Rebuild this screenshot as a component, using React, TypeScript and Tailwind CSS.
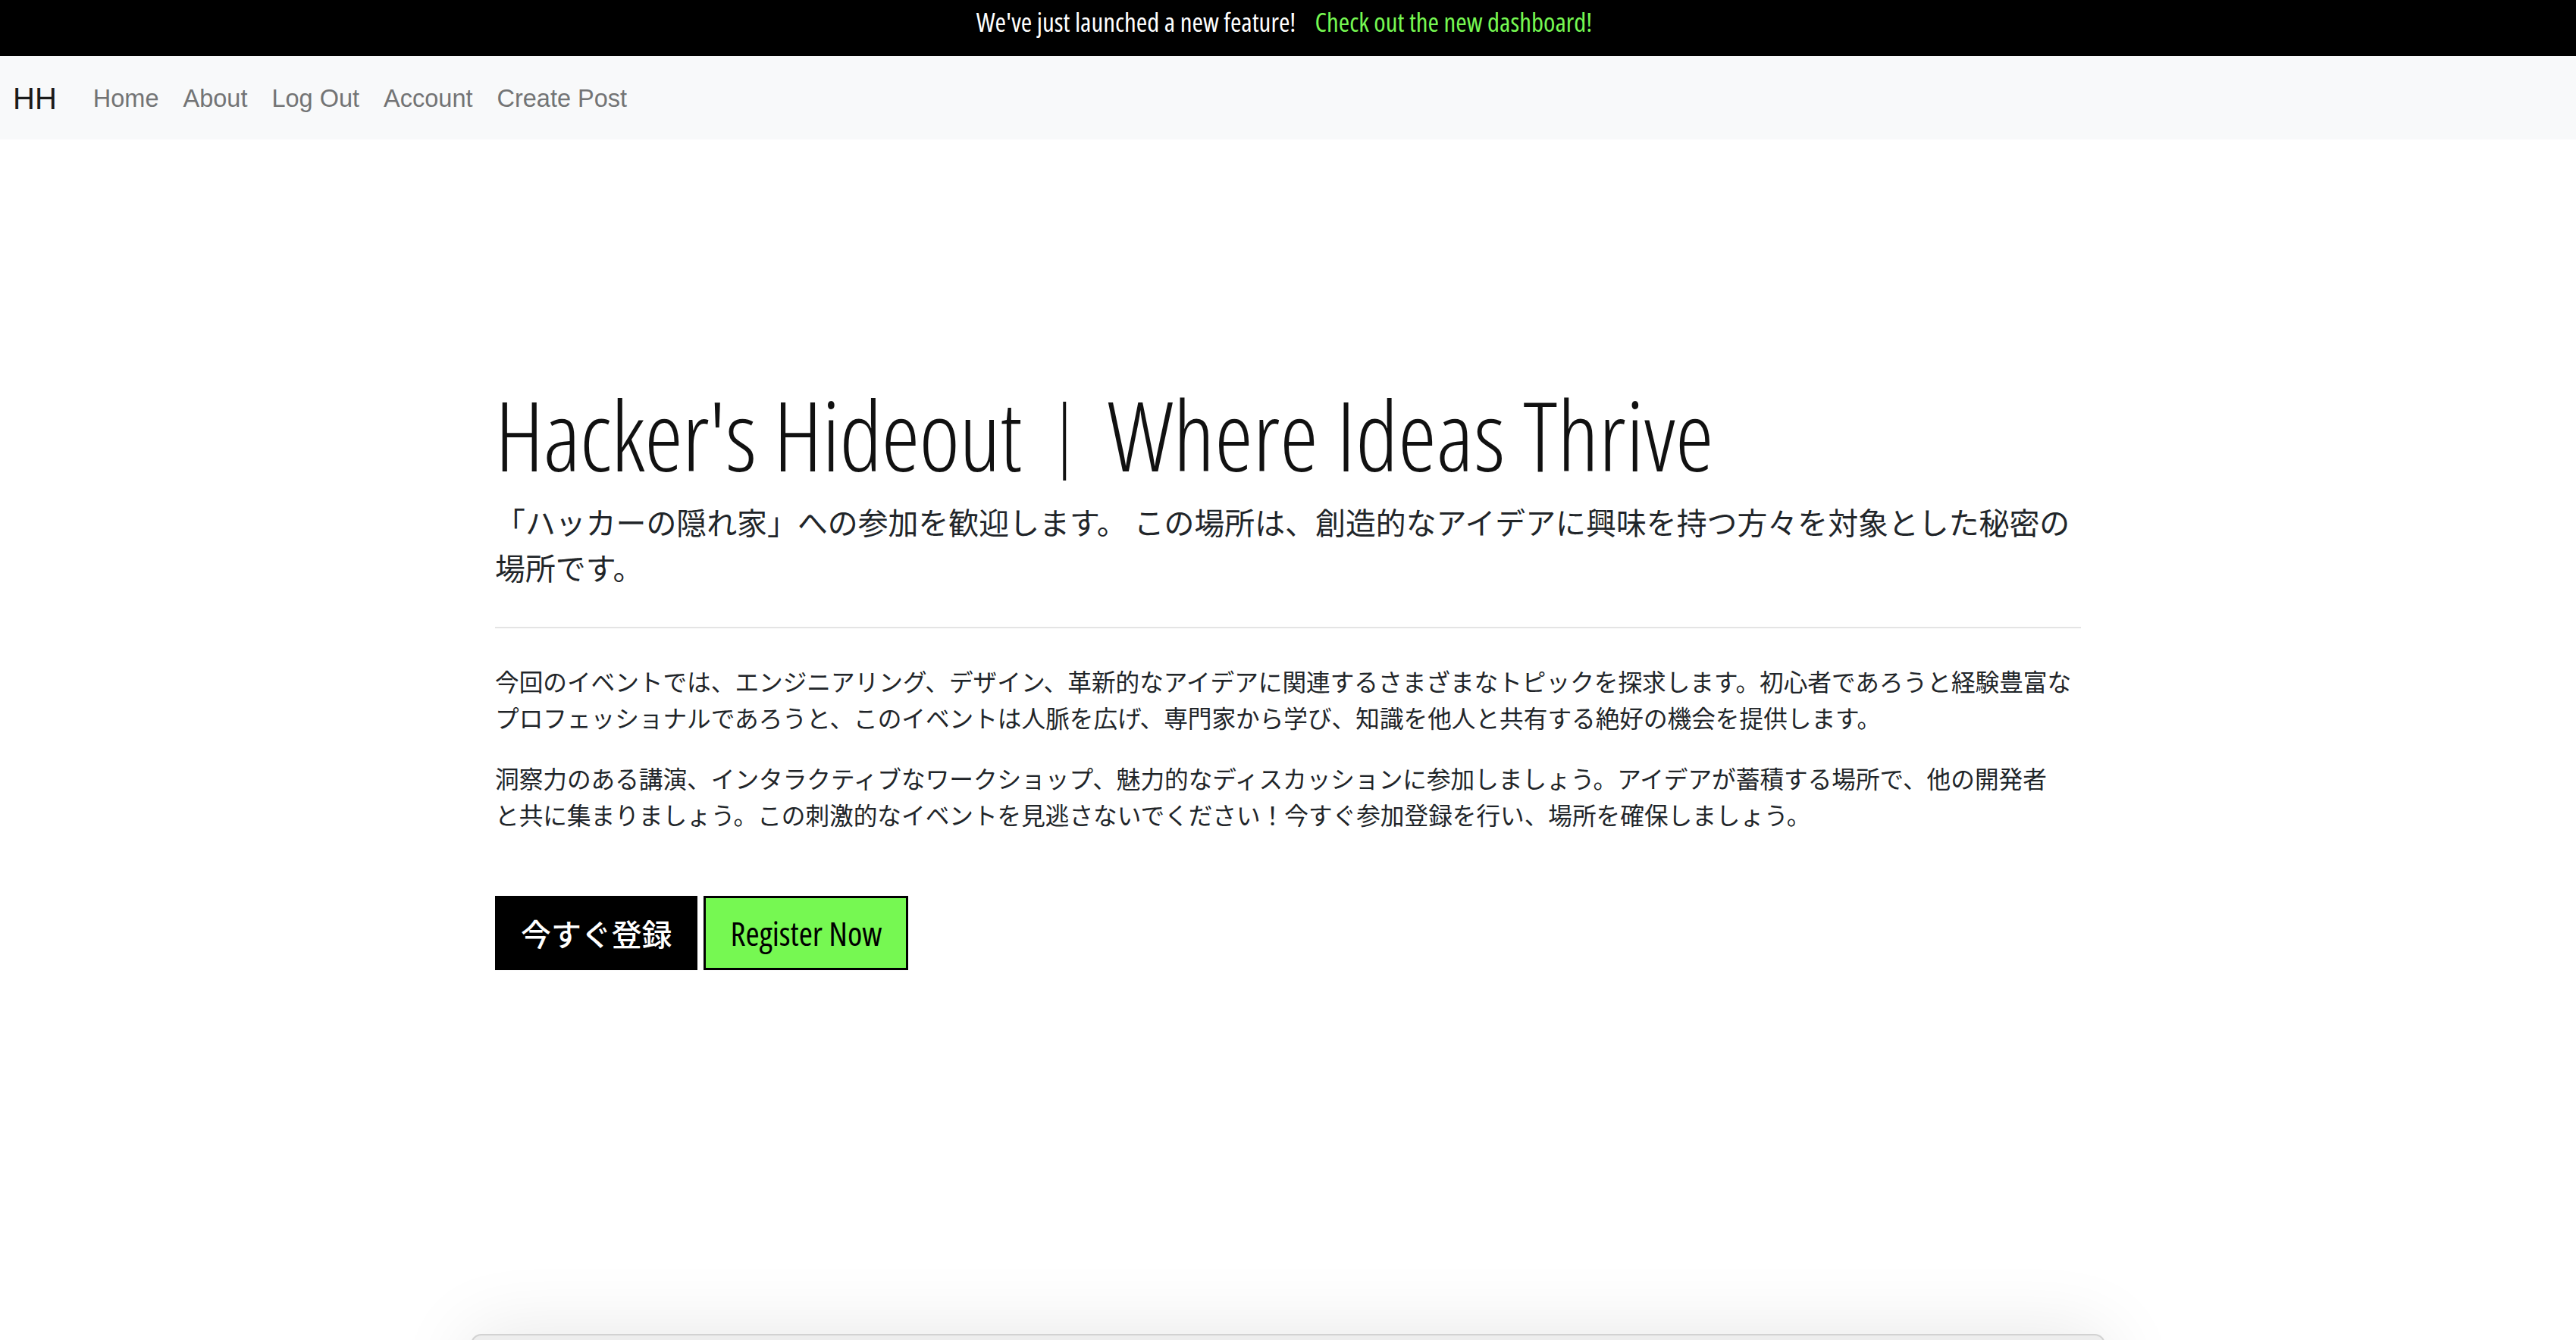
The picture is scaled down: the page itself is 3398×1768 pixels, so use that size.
const navLinks = ['Home', 'About', 'Log Out', 'Account', 'Create Post']

function Banner() {
  return (
    <div className="h-[74px] bg-black flex justify-center pt-[5px] pr-[10px] [font-family:'Open_Sans',sans-serif] [font-stretch:75%] text-[35px] leading-[48px]">
      <span className="text-white">We've just launched a new feature!</span>
      <a href="#" className="ml-[25px] text-[#76f852]">
        Check out the new dashboard!
      </a>
    </div>
  )
}

function Navbar() {
  return (
    <nav className="h-[110px] bg-[#f8f9fa] flex items-center pt-[2px] px-[17px] [font-family:'Liberation_Sans',Arial,sans-serif]">
      <a href="#" className="text-[40px] leading-[60px] text-[#1a1a1a] mr-[32px]">
        HH
      </a>
      <ul className="flex">
        {navLinks.map((l) => (
          <li key={l}>
            <a href="#" className="block px-[16px] text-[32.5px] leading-[48px] text-[#737475]">
              {l}
            </a>
          </li>
        ))}
      </ul>
    </nav>
  )
}

export default function App() {
  return (
    <div className="h-[1768px] overflow-hidden bg-white text-[#212529]">
      <Banner />
      <Navbar />

      <main className="w-[2092px] mx-auto pt-[312px]">
        <h1 className="text-[128px] leading-[1.2] font-light text-[#111] [font-family:'Open_Sans','Noto_Sans_CJK_JP',sans-serif] [font-stretch:75%]">
          <span className="tracking-[-0.8px]">Hacker's Hideout</span>
          <span className="text-[104px] mx-[5px] [font-family:'Noto_Sans_CJK_JP',sans-serif]">｜</span>
          Where Ideas Thrive
        </h1>
        <p className="mt-[8px] text-[39.9px] leading-[60px] [font-family:'Noto_Sans_CJK_JP',sans-serif]">
          「ハッカーの隠れ家」への参加を歓迎します。 この場所は、創造的なアイデアに興味を持つ方々を対象とした秘密の場所です。
        </p>

        <hr className="mt-[49px] border-0 h-[2px] bg-[#e4e4e4]" />

        <div className="mt-[45px] text-[31.65px] leading-[48px] [font-family:'Noto_Sans_CJK_JP',sans-serif]">
          <p>
            今回のイベントでは、エンジニアリング、デザイン、革新的なアイデアに関連するさまざまなトピックを探求します。初心者であろうと経験豊富なプロフェッショナルであろうと、このイベントは人脈を広げ、専門家から学び、知識を他人と共有する絶好の機会を提供します。
          </p>
          <p className="mt-[32px]">
            洞察力のある講演、インタラクティブなワークショップ、魅力的なディスカッションに参加しましょう。アイデアが蓄積する場所で、他の開発者
            <br />
            と共に集まりましょう。この刺激的なイベントを見逃さないでください！今すぐ参加登録を行い、場所を確保しましょう。
          </p>
        </div>

        <div className="mt-[84px] flex gap-[8px]">
          <a
            href="#"
            className="block border-2 border-black bg-black text-white px-[32px] py-[17px] text-[39.9px] leading-[60px] font-medium [font-family:'Noto_Sans_CJK_JP',sans-serif]"
          >
            今すぐ登録
          </a>
          <a
            href="#"
            className="block border-[3px] border-black bg-[#76f852] text-black px-[32px] py-[16px] text-[44px] leading-[60px] [font-family:'Open_Sans',sans-serif] [font-stretch:75%]"
          >
            Register Now
          </a>
        </div>
      </main>

      <div className="w-[2156px] mx-auto mt-[480px] h-[200px] rounded-t-[14px] border-2 border-[#d2d2d2] bg-[#ededed] shadow-[0_0_100px_rgba(0,0,0,0.1)]" />
    </div>
  )
}
